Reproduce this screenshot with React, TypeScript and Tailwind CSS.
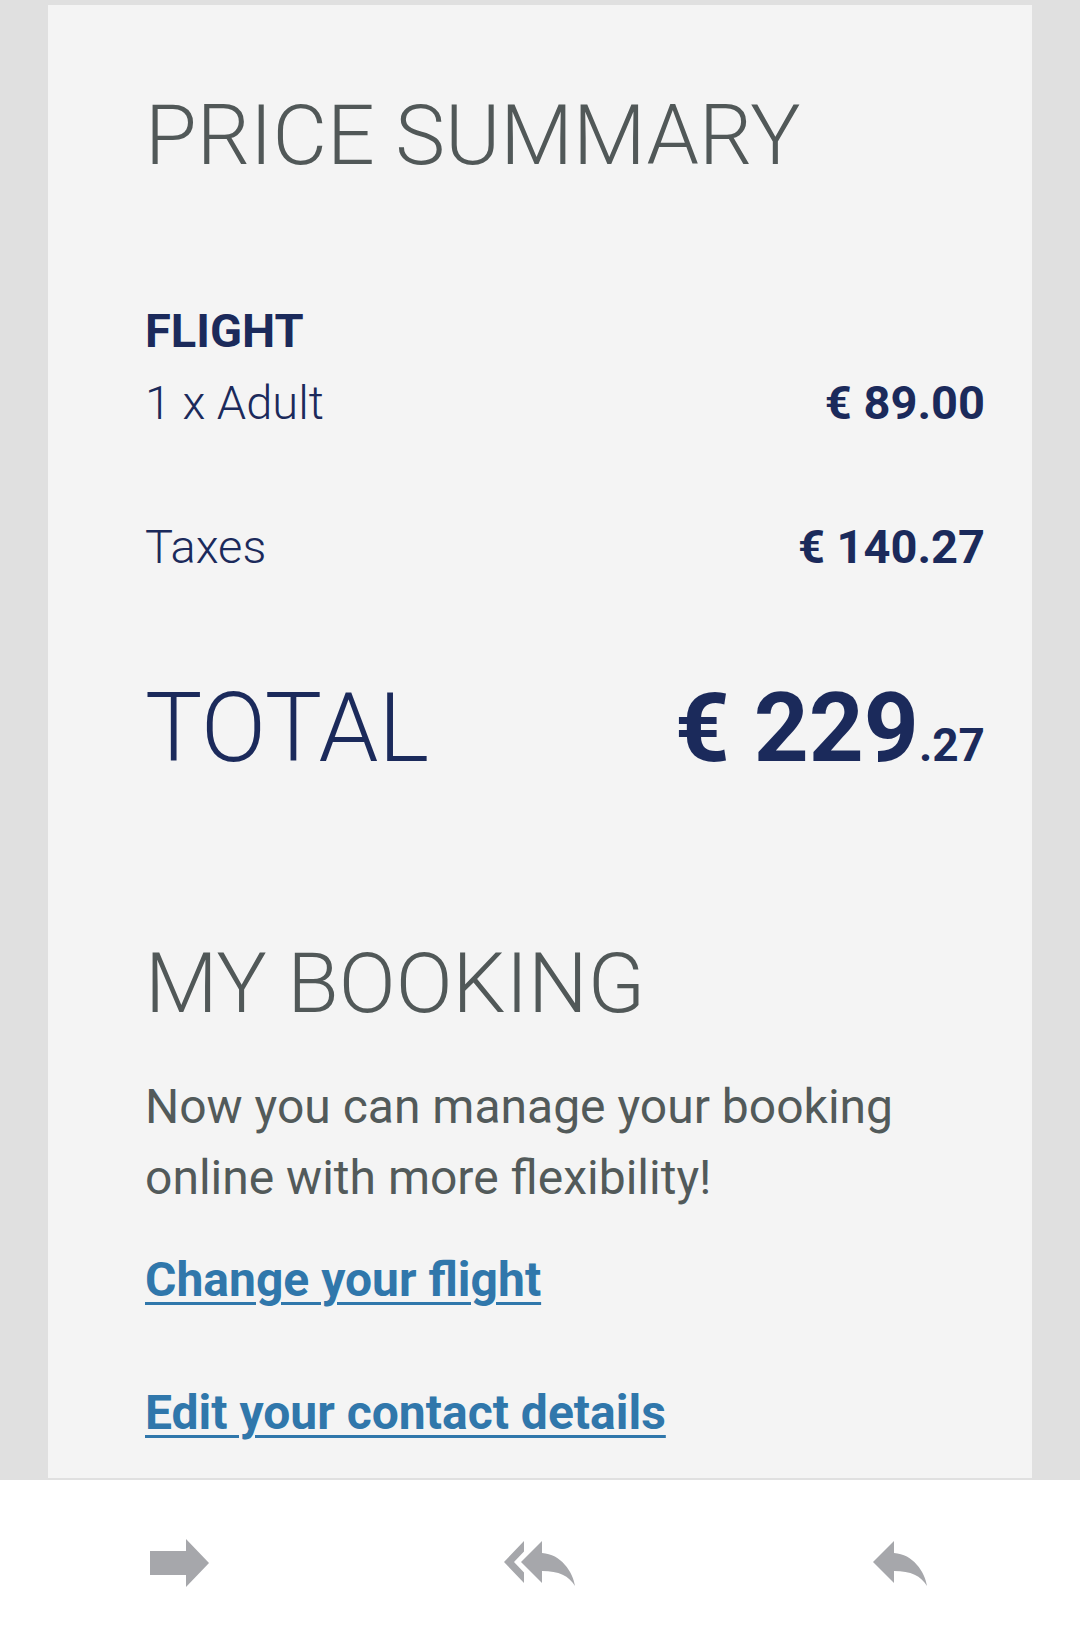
import * as React from "react";

const navy = "text-[#1b2a5b]";

function ForwardIcon() {
  return (
    <svg width="60" height="48" viewBox="0 0 60 48" fill="#a6a7ab">
      <path d="M0 12H36V0L59 24L36 48V36H0Z" />
    </svg>
  );
}

function ReplyAllIcon() {
  return (
    <svg width="72" height="50" viewBox="0 0 72 50" fill="#a6a7ab">
      <path d="M20 3L0 24L20 45V34.5L10 24L20 13.5Z" />
      <path d="M17 24L38 3V15C57 16 69 34 71 48C65 38 55 33 38 33V45Z" />
    </svg>
  );
}

function ReplyIcon() {
  return (
    <svg width="56" height="50" viewBox="0 0 56 50" fill="#a6a7ab">
      <path d="M1 24L22 3V15C41 16 53 34 55 48C49 38 39 33 22 33V45Z" />
    </svg>
  );
}

function PriceRow({ label, amount, gap }: { label: string; amount: string; gap: string }) {
  return (
    <div className={"flex items-baseline justify-between " + gap}>
      <span className={"text-[47px] leading-[56px] font-light " + navy}>{label}</span>
      <span className={"text-[47px] leading-[56px] font-bold " + navy}>{amount}</span>
    </div>
  );
}

export default function App() {
  return (
    <div className="min-h-[1646px] bg-white font-['Roboto','Liberation_Sans',sans-serif]">
      <div className="bg-[#e0e0e0] px-[48px] pt-[5px] pb-[2px]">
        <div className="bg-[#f4f4f4] pl-[97px] pr-[47px] pt-[81px] pb-[35px]">
          <h1 className="text-[84px] leading-[100px] font-light text-[#515858]">PRICE SUMMARY</h1>

          <div className={"mt-[117px] text-[47px] leading-[56px] font-bold " + navy}>FLIGHT</div>
          <PriceRow label="1 x Adult" amount="€ 89.00" gap="mt-[16px]" />
          <PriceRow label="Taxes" amount="€ 140.27" gap="mt-[88px]" />

          <div className="mt-[98px] flex items-baseline justify-between">
            <span className={"text-[96px] leading-[110px] font-light " + navy}>TOTAL</span>
            <span className={"leading-[110px] font-bold " + navy}>
              <span className="text-[96px]">€ 229</span>
              <span className="text-[46px]">.27</span>
            </span>
          </div>

          <h2 className="mt-[123px] text-[84px] leading-[100px] font-light text-[#515858]">MY BOOKING</h2>
          <p className="mt-[37px] text-[48px] leading-[71px] text-[#525a5a]">
            Now you can manage your booking
            <br />
            online with more flexibility!
          </p>
          <div className="mt-[37px] text-[48px] leading-[60px]">
            <a href="#" className="font-bold text-[#3077ab] underline decoration-[3px] underline-offset-[6px]">
              Change your flight
            </a>
          </div>
          <div className="mt-[73px] text-[48px] leading-[60px]">
            <a href="#" className="font-bold text-[#3077ab] underline decoration-[3px] underline-offset-[6px]">
              Edit your contact details
            </a>
          </div>
        </div>
      </div>

      <div className="grid h-[166px] grid-cols-3 items-center">
        <div className="flex justify-center">
          <ForwardIcon />
        </div>
        <div className="flex justify-center">
          <ReplyAllIcon />
        </div>
        <div className="flex justify-center">
          <ReplyIcon />
        </div>
      </div>
    </div>
  );
}
